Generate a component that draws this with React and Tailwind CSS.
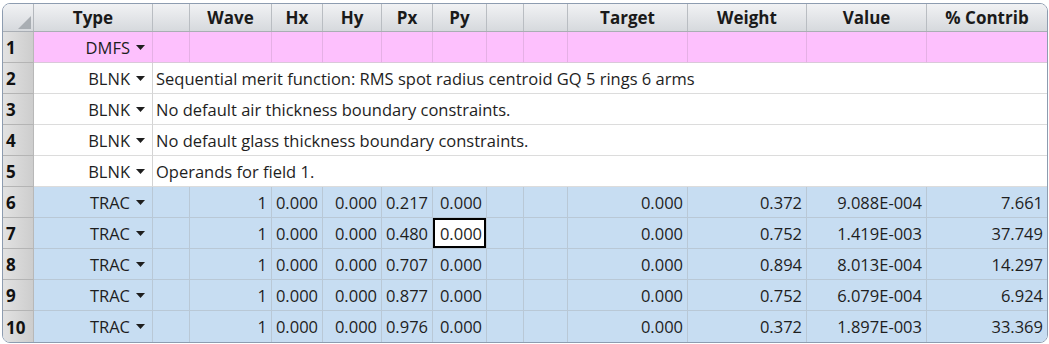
import React from 'react'

const COLS = [
  { key: 'type',    label: 'Type',      w: 119 },
  { key: 'b1',      label: '',          w: 37 },
  { key: 'wave',    label: 'Wave',      w: 82 },
  { key: 'hx',      label: 'Hx',        w: 51 },
  { key: 'hy',      label: 'Hy',        w: 59 },
  { key: 'px',      label: 'Px',        w: 51 },
  { key: 'py',      label: 'Py',        w: 54 },
  { key: 'b2',      label: '',          w: 37 },
  { key: 'b3',      label: '',          w: 44 },
  { key: 'target',  label: 'Target',    w: 120 },
  { key: 'weight',  label: 'Weight',    w: 119 },
  { key: 'value',   label: 'Value',     w: 120 },
  { key: 'contrib', label: '% Contrib', w: 120 },
]

const BLNK_TEXT = [
  'Sequential merit function: RMS spot radius centroid GQ 5 rings 6 arms',
  'No default air thickness boundary constraints.',
  'No default glass thickness boundary constraints.',
  'Operands for field 1.',
]

const TRAC = [
  ['0.217', '0.372', '9.088E-004', '7.661'],
  ['0.480', '0.752', '1.419E-003', '37.749'],
  ['0.707', '0.894', '8.013E-004', '14.297'],
  ['0.877', '0.752', '6.079E-004', '6.924'],
  ['0.976', '0.372', '1.897E-003', '33.369'],
]

const FONT = { fontFamily: '"Open Sans", "Noto Sans", sans-serif' }

function Arrow() {
  return (
    <svg width="9" height="5" viewBox="0 0 9 5" className="ml-[6px] mr-[7px] shrink-0 -mt-[2px]">
      <path d="M0 0 L9 0 L4.5 5 Z" fill="#1e1e1e" />
    </svg>
  )
}

function RowNum({ n, last }) {
  return (
    <div className={`w-[31px] shrink-0 flex items-center pl-[3px] pt-[2px] font-bold text-[17px] text-[#111] bg-gradient-to-r from-[#e2e2e2] to-[#cdcdcd] border-r border-[#b8b8b8] ${last ? '' : 'border-b border-b-[#b4b4b4]'}`}>
      {n}
    </div>
  )
}

function TypeCell({ name, line }) {
  return (
    <div className={`w-[119px] shrink-0 flex items-center justify-end pt-[2px] border-r ${line} text-[16.5px] text-[#1e1e1e]`}>
      <span>{name}</span>
      <Arrow />
    </div>
  )
}

export default function App() {
  return (
    <div className="w-[1049px] h-[344px] bg-white pl-[2px] pt-[3px]" style={FONT}>
      <div className="w-[1046px] h-[340px] border border-[#8d9cb0] rounded-[8px] overflow-hidden flex flex-col">

        {/* header */}
        <div className="h-[28px] flex shrink-0 bg-gradient-to-b from-[#f1f2f4] to-[#d6d9dd] border-b border-[#a9aeb4]">
          <div className="w-[31px] shrink-0 relative border-r border-[#b4b8bd]">
            <svg width="13" height="13" viewBox="0 0 13 13" className="absolute right-[2px] bottom-[2px]">
              <path d="M13 0 L13 13 L0 13 Z" fill="#a9aeb3" />
            </svg>
          </div>
          {COLS.map(c => (
            <div
              key={c.key}
              style={{ width: c.w }}
              className="shrink-0 flex items-center justify-center pt-[1px] border-r border-[#b9bdc2] last:border-r-0 font-bold text-[17px] text-[#1a1a1a]"
            >
              {c.label}
            </div>
          ))}
        </div>

        {/* DMFS */}
        <div className="h-[31px] flex shrink-0 bg-[#fdc0fd]">
          <RowNum n={1} />
          <TypeCell name="DMFS" line="border-[#e5b0e5] border-b border-b-[#d9c9d9]" />
          {COLS.slice(1).map(c => (
            <div key={c.key} style={{ width: c.w }} className="shrink-0 border-r border-[#e5b0e5] last:border-r-0 border-b border-b-[#d9c9d9]" />
          ))}
        </div>

        {/* BLNK rows */}
        {BLNK_TEXT.map((t, i) => (
          <div key={i} className="h-[31px] flex shrink-0 bg-white">
            <RowNum n={i + 2} />
            <TypeCell name="BLNK" line="border-[#d4d4d4] border-b border-b-[#dcdcdc]" />
            <div className="flex-1 flex items-center pl-[3px] pt-[2px] border-b border-[#dcdcdc] text-[16.5px] text-[#1e1e1e] whitespace-nowrap">
              {t}
            </div>
          </div>
        ))}

        {/* TRAC rows */}
        {TRAC.map((r, i) => {
          const last = i === TRAC.length - 1
          const vals = {
            wave: '1', hx: '0.000', hy: '0.000', px: r[0], py: '0.000',
            target: '0.000', weight: r[1], value: r[2], contrib: r[3],
          }
          return (
            <div key={i} className="h-[31px] flex shrink-0 bg-[#c7ddf2]">
              <RowNum n={i + 6} last={last} />
              <TypeCell name="TRAC" line={`border-[#b9c8d6] ${last ? '' : 'border-b border-b-[#b9c8d6]'}`} />
              {COLS.slice(1).map(c => {
                const selected = i === 1 && c.key === 'py'
                return (
                  <div
                    key={c.key}
                    style={{ width: c.w }}
                    className={`shrink-0 border-r border-[#b9c8d6] last:border-r-0 ${last ? '' : 'border-b border-b-[#b9c8d6]'} text-[16.5px] text-[#1e1e1e]`}
                  >
                    {selected ? (
                      <div className="h-full flex items-center justify-end pr-[2px] pt-[2px] bg-white border-2 border-black">
                        {vals[c.key]}
                      </div>
                    ) : (
                      <div className="h-full flex items-center justify-end pr-[4px] pt-[2px]">
                        {vals[c.key] || ''}
                      </div>
                    )}
                  </div>
                )
              })}
            </div>
          )
        })}
      </div>
    </div>
  )
}
